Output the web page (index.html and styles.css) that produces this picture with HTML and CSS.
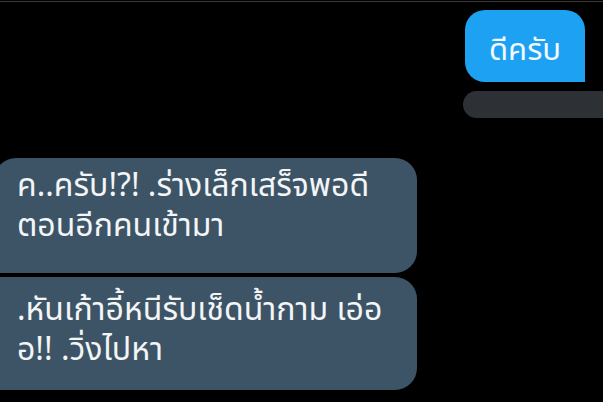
FILE: index.html
```html
<!DOCTYPE html>
<html lang="th">
<head>
<meta charset="utf-8">
<link rel="stylesheet" href="styles.css">
</head>
<body>
<div class="screen">
  <div class="topline"></div>
  <div class="out-row">
    <div class="bubble-out">ดีครับ</div>
  </div>
  <div class="meta-row"><div class="meta-bar"></div></div>
  <div class="in-group">
    <div class="bubble-in first">ค..ครับ!?! .ร่างเล็กเสร็จพอดี<br>ตอนอีกคนเข้ามา</div>
    <div class="bubble-in last">.หันเก้าอี้หนีรับเช็ดน้ำกาม เอ่อ<br>อ!! .วิ่งไปหา</div>
  </div>
</div>
</body>
</html>
```
FILE: styles.css
```css
html, body {
  margin: 0;
  padding: 0;
  background: #000;
}
.screen {
  width: 603px;
  height: 402px;
  overflow: hidden;
  background: #000;
  display: flex;
  flex-direction: column;
  font-family: "Noto Sans Thai", "Noto Sans Thai UI", "Noto Sans", "DejaVu Sans", sans-serif;
  color: #f2f4f6;
}
.topline {
  height: 1px;
  margin-top: 1px;
  background: #3a3a3a;
}
.out-row {
  display: flex;
  justify-content: flex-end;
  padding-right: 18px;
  margin-top: 8px;
}
.bubble-out {
  width: 120px;
  height: 72px;
  box-sizing: border-box;
  padding-top: 10px;
  background: #1da1f2;
  border-radius: 20px 20px 0 20px;
  display: flex;
  align-items: center;
  justify-content: center;
  font-size: 31px;
  line-height: 44px;
  color: #f4f9fd;
}
.meta-row {
  display: flex;
  justify-content: flex-end;
  margin-top: 9px;
}
.meta-bar {
  width: 140px;
  height: 27px;
  background: #2d3135;
  border-radius: 14px 0 0 14px;
}
.in-group {
  margin-top: 40px;
  margin-left: -6px;
  display: flex;
  flex-direction: column;
  gap: 4px;
}
.bubble-in {
  width: 423px;
  box-sizing: border-box;
  background: #3d5466;
  font-size: 32px;
  line-height: 40px;
  padding: 8px 10px 0 23px;
  color: #f3f5f7;
  white-space: nowrap;
}
.bubble-in.first {
  height: 115px;
  border-radius: 22px 22px 22px 4px;
}
.bubble-in.last {
  height: 113px;
  padding-top: 13px;
  border-radius: 4px 22px 22px 4px;
}
```
